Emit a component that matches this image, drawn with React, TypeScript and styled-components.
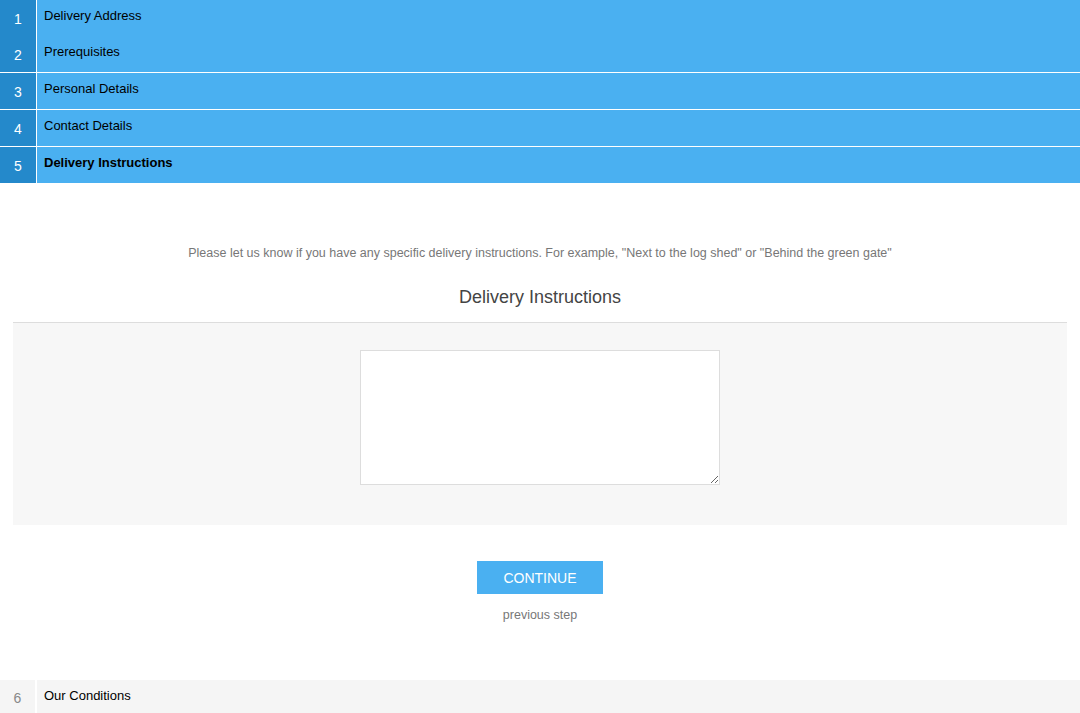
import styled, { createGlobalStyle } from "styled-components"

const GlobalStyle = createGlobalStyle`
  html, body {
    margin: 0;
    padding: 0;
    background: #fff;
    font-family: "Liberation Sans", Arial, sans-serif;
  }
`

type Step = { n: number; label: string; joined?: boolean }

const doneSteps: Step[] = [
  { n: 1, label: "Delivery Address" },
  { n: 2, label: "Prerequisites", joined: true },
  { n: 3, label: "Personal Details" },
  { n: 4, label: "Contact Details" },
]

const App = () => {
  return (
    <Page>
      <GlobalStyle />
      <Steps>
        {doneSteps.map((s) => (
          <StepRow key={s.n} $joined={s.joined}>
            <StepNumber>{s.n}</StepNumber>
            <StepLabel>{s.label}</StepLabel>
          </StepRow>
        ))}
        <StepRow>
          <StepNumber>5</StepNumber>
          <StepLabel $active>Delivery Instructions</StepLabel>
        </StepRow>
      </Steps>

      <Content>
        <Intro>
          Please let us know if you have any specific delivery instructions. For example, "Next to the log
          shed" or "Behind the green gate"
        </Intro>
        <SectionTitle>Delivery Instructions</SectionTitle>
        <FieldPanel>
          <TextArea />
        </FieldPanel>
        <Actions>
          <ContinueButton>CONTINUE</ContinueButton>
          <PrevLink>previous step</PrevLink>
        </Actions>
      </Content>

      <PendingRow>
        <PendingNumber>6</PendingNumber>
        <StepLabel>Our Conditions</StepLabel>
      </PendingRow>
    </Page>
  )
}

const Page = styled.div`
  width: 1080px;
  min-height: 713px;
  display: flex;
  flex-direction: column;
`

const Steps = styled.div`
  display: flex;
  flex-direction: column;
  background: #4ab0f1;
`

const StepRow = styled.div<{ $joined?: boolean }>`
  display: flex;
  height: 36px;
  background: #4ab0f1;
  border-top: ${(p) => (p.$joined ? "0" : "1px solid #fff")};
  &:first-child {
    border-top: 0;
  }
`

const StepNumber = styled.div`
  width: 37px;
  flex: 0 0 37px;
  background: #2489cb;
  border-right: 1px solid #fff;
  color: #fff;
  font-size: 14px;
  display: flex;
  align-items: center;
  justify-content: center;
  padding-top: 2px;
  box-sizing: border-box;
`

const StepLabel = styled.div<{ $active?: boolean }>`
  padding-left: 7px;
  padding-top: 8px;
  font-size: 13px;
  color: #000;
  font-weight: ${(p) => (p.$active ? "bold" : "normal")};
`

const Content = styled.div`
  display: flex;
  flex-direction: column;
  align-items: center;
  padding: 63px 13px 55px;
`

const Intro = styled.p`
  margin: 0;
  font-size: 12.5px;
  color: #777;
  text-align: center;
`

const SectionTitle = styled.h2`
  margin: 27px 0 0;
  font-size: 18px;
  font-weight: normal;
  color: #444;
  line-height: 21px;
`

const FieldPanel = styled.div`
  margin-top: 14px;
  align-self: stretch;
  background: #f7f7f7;
  border-top: 1px solid #ddd;
  display: flex;
  justify-content: center;
  padding: 27px 0 40px;
`

const TextArea = styled.textarea`
  width: 360px;
  height: 135px;
  box-sizing: border-box;
  border: 1px solid #ddd;
  background: #fff;
  font-family: inherit;
  outline: 0;
`

const Actions = styled.div`
  margin-top: 36px;
  display: flex;
  flex-direction: column;
  align-items: center;
`

const ContinueButton = styled.button`
  width: 126px;
  height: 33px;
  border: 0;
  background: #4ab0f1;
  color: #fff;
  font-family: inherit;
  font-size: 14px;
  cursor: pointer;
`

const PrevLink = styled.a`
  margin-top: 14px;
  font-size: 12.5px;
  color: #777;
  cursor: pointer;
`

const PendingRow = styled.div`
  display: flex;
  height: 33px;
  background: #f5f5f5;
  margin-top: auto;
`

const PendingNumber = styled.div`
  width: 37px;
  flex: 0 0 37px;
  border-right: 2px solid #fff;
  color: #888;
  font-size: 14px;
  display: flex;
  align-items: center;
  justify-content: center;
  padding-top: 2px;
  box-sizing: border-box;
`

export default App
